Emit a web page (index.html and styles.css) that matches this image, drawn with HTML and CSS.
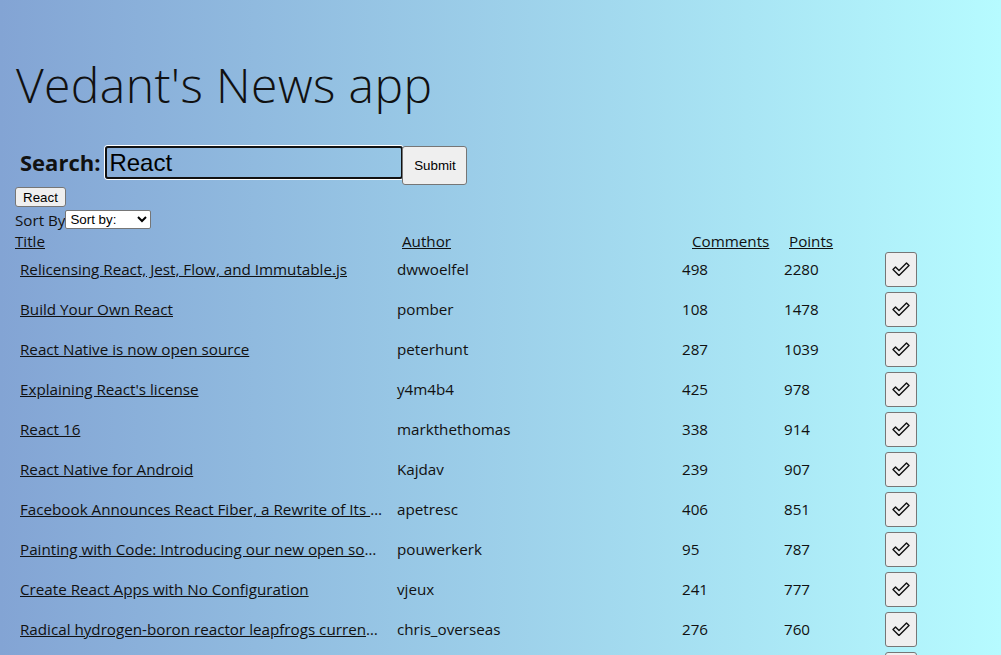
FILE: index.html
```html
<!DOCTYPE html>
<html>
<head>
<meta charset="utf-8">
<link rel="stylesheet" href="styles.css">
</head>
<body>
<div class="app">
  <h1 class="title">Vedant's News app</h1>
  <form class="search">
    <label class="search-label">Search:</label>
    <input class="search-input" type="text" value="React">
    <button class="btn submit" type="button">Submit</button>
  </form>
  <div><button class="btn tag" type="button">React</button></div>
  <div class="sort">Sort By<select class="sort-select"><option>Sort by:</option></select></div>
  <div class="head">
    <a href="#">Title</a><a href="#">Author</a><a href="#">Comments</a><a href="#">Points</a>
  </div>
  <div class="list">
    <div class="row"><a class="t" href="#">Relicensing React, Jest, Flow, and Immutable.js</a><span>dwwoelfel</span><span>498</span><span>2280</span><button class="btn check" type="button"><svg width="18" height="14" viewBox="0 0 18 14"><polygon points="1,7.5 3.5,5 7,8.5 14.5,1 17,3.5 7,13.5" fill="none" stroke="#111" stroke-width="1.4" stroke-linejoin="round"/></svg></button></div>
    <div class="row"><a class="t" href="#">Build Your Own React</a><span>pomber</span><span>108</span><span>1478</span><button class="btn check" type="button"><svg width="18" height="14" viewBox="0 0 18 14"><polygon points="1,7.5 3.5,5 7,8.5 14.5,1 17,3.5 7,13.5" fill="none" stroke="#111" stroke-width="1.4" stroke-linejoin="round"/></svg></button></div>
    <div class="row"><a class="t" href="#">React Native is now open source</a><span>peterhunt</span><span>287</span><span>1039</span><button class="btn check" type="button"><svg width="18" height="14" viewBox="0 0 18 14"><polygon points="1,7.5 3.5,5 7,8.5 14.5,1 17,3.5 7,13.5" fill="none" stroke="#111" stroke-width="1.4" stroke-linejoin="round"/></svg></button></div>
    <div class="row"><a class="t" href="#">Explaining React's license</a><span>y4m4b4</span><span>425</span><span>978</span><button class="btn check" type="button"><svg width="18" height="14" viewBox="0 0 18 14"><polygon points="1,7.5 3.5,5 7,8.5 14.5,1 17,3.5 7,13.5" fill="none" stroke="#111" stroke-width="1.4" stroke-linejoin="round"/></svg></button></div>
    <div class="row"><a class="t" href="#">React 16</a><span>markthethomas</span><span>338</span><span>914</span><button class="btn check" type="button"><svg width="18" height="14" viewBox="0 0 18 14"><polygon points="1,7.5 3.5,5 7,8.5 14.5,1 17,3.5 7,13.5" fill="none" stroke="#111" stroke-width="1.4" stroke-linejoin="round"/></svg></button></div>
    <div class="row"><a class="t" href="#">React Native for Android</a><span>Kajdav</span><span>239</span><span>907</span><button class="btn check" type="button"><svg width="18" height="14" viewBox="0 0 18 14"><polygon points="1,7.5 3.5,5 7,8.5 14.5,1 17,3.5 7,13.5" fill="none" stroke="#111" stroke-width="1.4" stroke-linejoin="round"/></svg></button></div>
    <div class="row"><a class="t" href="#">Facebook Announces React Fiber, a Rewrite of Its React Framework</a><span>apetresc</span><span>406</span><span>851</span><button class="btn check" type="button"><svg width="18" height="14" viewBox="0 0 18 14"><polygon points="1,7.5 3.5,5 7,8.5 14.5,1 17,3.5 7,13.5" fill="none" stroke="#111" stroke-width="1.4" stroke-linejoin="round"/></svg></button></div>
    <div class="row"><a class="t" href="#">Painting with Code: Introducing our new open source library React Sketch.app</a><span>pouwerkerk</span><span>95</span><span>787</span><button class="btn check" type="button"><svg width="18" height="14" viewBox="0 0 18 14"><polygon points="1,7.5 3.5,5 7,8.5 14.5,1 17,3.5 7,13.5" fill="none" stroke="#111" stroke-width="1.4" stroke-linejoin="round"/></svg></button></div>
    <div class="row"><a class="t" href="#">Create React Apps with No Configuration</a><span>vjeux</span><span>241</span><span>777</span><button class="btn check" type="button"><svg width="18" height="14" viewBox="0 0 18 14"><polygon points="1,7.5 3.5,5 7,8.5 14.5,1 17,3.5 7,13.5" fill="none" stroke="#111" stroke-width="1.4" stroke-linejoin="round"/></svg></button></div>
    <div class="row"><a class="t" href="#">Radical hydrogen-boron reactor leapfrogs current nuclear fusion tech</a><span>chris_overseas</span><span>276</span><span>760</span><button class="btn check" type="button"><svg width="18" height="14" viewBox="0 0 18 14"><polygon points="1,7.5 3.5,5 7,8.5 14.5,1 17,3.5 7,13.5" fill="none" stroke="#111" stroke-width="1.4" stroke-linejoin="round"/></svg></button></div>
    <div class="row"><a class="t" href="#">React v15.0</a><span>shahzeb</span><span>168</span><span>732</span><button class="btn check" type="button"><svg width="18" height="14" viewBox="0 0 18 14"><polygon points="1,7.5 3.5,5 7,8.5 14.5,1 17,3.5 7,13.5" fill="none" stroke="#111" stroke-width="1.4" stroke-linejoin="round"/></svg></button></div>
  </div>
</div>
</body>
</html>
```

FILE: styles.css
```css
html, body {
  margin: 0;
  padding: 0;
}
body {
  height: 655px;
  background: linear-gradient(to right, #83a4d4, #b6fbff);
  font-family: "Open Sans", "Noto Sans", sans-serif;
  font-size: 15.2px;
  color: #111;
  overflow: hidden;
}
.app {
  padding: 0 15px;
}
.title {
  margin: 0;
  padding-top: 52px;
  font-weight: 300;
  font-size: 48px;
  line-height: 66px;
  letter-spacing: 0.4px;
  padding-left: 1px;
}
.search {
  display: flex;
  align-items: flex-start;
  margin: 28px 0 0;
  padding-left: 5px;
}
.search-label {
  font-weight: 700;
  font-size: 22px;
  line-height: 33px;
  margin-right: 5px;
}
.search-input {
  width: 298px;
  height: 33px;
  box-sizing: border-box;
  border: 2px solid #111;
  border-radius: 3px;
  box-shadow: 0 0 0 1px #fff;
  background: transparent;
  font-family: "Liberation Sans", Arial, sans-serif;
  font-size: 24px;
  padding: 0 2px;
  color: #000;
  outline: none;
}
.btn {
  background: #efefef;
  border: 1px solid #767676;
  border-radius: 3px;
  font-family: "Liberation Sans", Arial, sans-serif;
  font-size: 13.33px;
  color: #000;
  padding: 0;
}
.submit {
  width: 65px;
  height: 39px;
  margin-left: -1px;
}
.tag {
  width: 51px;
  height: 20px;
  margin-top: 2px;
  display: block;
}
.sort {
  display: flex;
  align-items: center;
  height: 23px;
  padding-top: 1px;
}
.sort-select {
  width: 86px;
  height: 19px;
  font-family: "Liberation Sans", Arial, sans-serif;
  font-size: 13.33px;
  background: #fff;
  border: 1px solid #767676;
  border-radius: 2px;
  color: #000;
  padding: 0;
}
a {
  color: #111;
}
.head {
  display: grid;
  grid-template-columns: 387px 290px 97px 80px;
  line-height: 20px;
}
.list {
  margin-top: -2px;
}
.row {
  display: grid;
  grid-template-columns: 377px 285px 102px 101px 32px;
  align-items: center;
  height: 40px;
  padding-left: 5px;
}
.row > span, .row > a {
  white-space: nowrap;
}
.t {
  overflow: hidden;
  text-overflow: ellipsis;
  max-width: 363px;
}
.check {
  width: 32px;
  height: 35px;
  display: flex;
  align-items: center;
  justify-content: center;
}
```
